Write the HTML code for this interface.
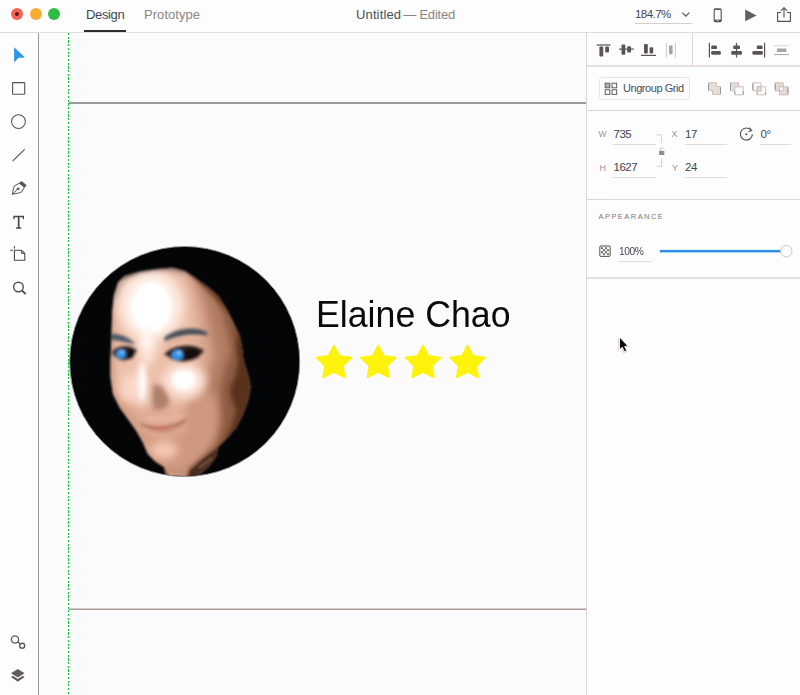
<!DOCTYPE html>
<html><head><meta charset="utf-8">
<style>
*{box-sizing:border-box;margin:0;padding:0}
html,body{width:800px;height:695px;overflow:hidden;background:#fbfbfb;font-family:"Liberation Sans",sans-serif;}
.abs{position:absolute}
#top{left:0;top:0;width:800px;height:33px;background:#fdfdfd;border-bottom:1px solid #e5dbd6}
#left{left:0;top:33px;width:39px;height:662px;background:#fdfdfd;border-right:1px solid #9b999a}
#canvas{left:39px;top:33px;width:547px;height:662px;background:#fbfbfb}
#right{left:586px;top:33px;width:214px;height:662px;background:#fdfdfd;border-left:1px solid #ddd6d3}
.t{position:absolute;white-space:nowrap;color:#3c3836;line-height:1}
.dot{position:absolute;width:12px;height:12px;border-radius:50%}
.hl{position:absolute;height:1px;background:#ddd6d3}
.ul{position:absolute;height:1px;background:#e3dbd8}
svg{position:absolute;left:0;top:0;overflow:visible}
</style></head><body>
<!-- TOP BAR -->
<div id="top" class="abs">
  <div class="dot" style="left:11px;top:8px;background:#f4625a"></div>
  <div class="abs" style="left:15px;top:12px;width:4px;height:4px;border-radius:50%;background:#5a1d12"></div>
  <div class="dot" style="left:30px;top:8px;background:#fbad33"></div>
  <div class="dot" style="left:48px;top:8px;background:#2dbd44"></div>
  <div class="t" style="left:86px;top:8px;font-size:13px;letter-spacing:-0.35px;color:#3d4a55">Design</div>
  <div class="abs" style="left:84px;top:30px;width:42px;height:2px;background:#2e2b2a"></div>
  <div class="t" style="left:144px;top:8px;font-size:13px;letter-spacing:0.05px;color:#8b8583">Prototype</div>
  <div class="t" style="left:356px;top:8px;font-size:13px;letter-spacing:0.13px;color:#46525c">Untitled <span style="color:#8b8583;letter-spacing:-0.2px;margin-left:-1.7px">— Edited</span></div>
  <div class="t" style="left:635px;top:9px;font-size:11.5px;letter-spacing:-0.55px;color:#3f4953">184.7%</div>
  <div class="abs" style="left:635px;top:23px;width:57px;height:1px;background:#d7cdc9"></div>
</div>
<!-- LEFT TOOLBAR -->
<div id="left" class="abs"></div>
<!-- CANVAS -->
<div id="canvas" class="abs"></div>
<!-- RIGHT PANEL -->
<div id="right" class="abs"></div>


<!-- UI ICONS SVG -->
<svg width="800" height="695" viewBox="0 0 800 695" fill="none">
<!-- top right -->
<path d="M682.3,12.6 L685.8,16.2 L689.3,12.6" stroke="#5a5553" stroke-width="1.2"/>
<rect x="714.2" y="9" width="7" height="12.6" rx="1.2" stroke="#55504e" stroke-width="1.1"/>
<rect x="714.2" y="8.6" width="7" height="1.3" fill="#55504e"/><rect x="714.2" y="19.6" width="7" height="2.2" fill="#55504e"/><rect x="716.8" y="20.2" width="1.8" height="0.9" fill="#d8d0cc"/>
<path d="M745.2,9.4 L756.6,15.4 L745.2,21.3 Z" fill="#65605d"/>
<path d="M781,12.5 L777.6,12.5 L777.6,21.4 L790.4,21.4 L790.4,12.5 L787,12.5" stroke="#55504e" stroke-width="1.1"/>
<path d="M784,17.5 L784,8.2 M780.8,10.8 L784,7.7 L787.2,10.8" stroke="#55504e" stroke-width="1.1"/>

<!-- left tools -->
<path d="M14.1,47.2 L24.5,57.1 L24.3,57.8 L18.5,57.8 L14.1,62.5 Z" fill="#2c96e7"/>
<rect x="12.6" y="82.6" width="12.1" height="11.7" rx="0.7" stroke="#55514f" stroke-width="1.1"/>
<circle cx="18.5" cy="121.6" r="6.9" stroke="#55514f" stroke-width="1.05"/>
<path d="M12.6,161.2 L24.6,149.4" stroke="#55514f" stroke-width="1.1"/>
<!-- pen -->
<g stroke="#55514f" stroke-width="1" stroke-linejoin="round" stroke-linecap="round">
<path d="M12.6,194 C12.9,190.4 13.5,187.8 14.5,185.8 L19.7,183.1 L24.5,187 L21.8,191.8 C19.4,193.1 16,193.7 12.6,194 Z"/>
<path d="M12.9,193.7 L17.4,189.4"/>
<circle cx="18" cy="188.8" r="0.9" fill="#55514f"/>
<path d="M19.8,183 L21.7,181.6 L26.1,185.4 L24.6,186.9 Z" fill="#55514f"/>
</g>
<!-- T -->
<path d="M13.3,215.8 H24 V219.2 H22.9 L22.6,217.3 H19.5 V227.2 L21.4,227.5 V228.7 H15.9 V227.5 L17.8,227.2 V217.3 H14.7 L14.4,219.2 H13.3 Z" fill="#4a4644"/>
<!-- artboard -->
<path d="M14.4,250.3 H21.4 L24.8,253.5 V260.2 H14.4 Z" stroke="#4a4644" stroke-width="1.1"/>
<path d="M21.4,250.3 V253.5 H24.8 Z" fill="#b9b5b3" stroke="#4a4644" stroke-width="0.8"/>
<path d="M10.2,250.3 H12.9 M14.4,245.9 V248.6" stroke="#4a4644" stroke-width="1"/>
<!-- zoom -->
<circle cx="18.45" cy="287" r="4.8" stroke="#524e4c" stroke-width="1.4"/>
<path d="M21.9,290.4 L25.7,294.2" stroke="#524e4c" stroke-width="1.9"/>
<!-- link -->
<circle cx="15" cy="639.5" r="3.6" stroke="#5f5b59" stroke-width="1.35"/>
<circle cx="22.2" cy="645.7" r="2.5" stroke="#5f5b59" stroke-width="1.35"/>
<path d="M17.9,642 L20.1,643.9" stroke="#5f5b59" stroke-width="1.3"/>
<!-- layers -->
<path d="M17.8,669 L24.6,673.2 L17.8,677.4 L11,673.2 Z" fill="#625d5a"/>
<path d="M11,677 L12.8,675.8 L17.8,679 L22.8,675.8 L24.6,677 L17.8,681.8 Z" fill="#625d5a"/>

<!-- right: align row -->
<g fill="#5a5553">
<rect x="596.6" y="44.4" width="14" height="1.2"/><rect x="599.4" y="46.4" width="3.8" height="10.2" rx="1"/><rect x="605.2" y="46.4" width="3.8" height="6.2" rx="1"/>
<rect x="619" y="48.5" width="14.8" height="1.2"/><rect x="621.5" y="44.6" width="3.8" height="10.2" rx="1"/><rect x="627.2" y="46.2" width="3.8" height="6.4" rx="1"/>
<rect x="641" y="54.8" width="15" height="1.2"/><rect x="644" y="44" width="3.8" height="9.6" rx="1"/><rect x="649.6" y="47.2" width="3.6" height="6.4" rx="1"/>
</g>
<g fill="#d9cbc5">
<rect x="665.8" y="42.8" width="1.1" height="14.8"/><rect x="674.9" y="42.8" width="1.1" height="14.8"/><rect x="669" y="45.6" width="3.6" height="8.6" rx="0.6" fill="#a5a5a7"/>
</g>
<g fill="#5a5553">
<rect x="708.8" y="42.8" width="1.2" height="14.8"/><rect x="711.2" y="45.6" width="5.8" height="3.5" rx="1.2"/><rect x="711.2" y="51" width="9.6" height="3.8" rx="1.2"/>
<rect x="735.9" y="42.8" width="1.2" height="14.8"/><rect x="733.2" y="45.6" width="6.8" height="3.5" rx="1.2"/><rect x="731.2" y="51" width="10.8" height="3.8" rx="1.2"/>
<rect x="764" y="42.8" width="1.2" height="14.8"/><rect x="756.8" y="45.6" width="5.8" height="3.5" rx="1.2"/><rect x="752.4" y="51" width="10.4" height="3.8" rx="1.2"/>
</g>
<rect x="774" y="45.2" width="15" height="1.1" fill="#e6d6ce"/><rect x="774" y="54" width="15" height="1.1" fill="#a9aeb1"/><rect x="776.9" y="48.4" width="9.4" height="3.6" rx="0.6" fill="#a5a5a7"/>
<!-- ungroup grid icon -->
<g stroke="#65605d" stroke-width="1">
<rect x="605.2" y="83.2" width="4.6" height="4.6" fill="#b3b1b0"/><rect x="612" y="83.2" width="4.6" height="4.6"/>
<rect x="605.2" y="89.8" width="4.6" height="4.6"/><rect x="612" y="89.8" width="4.6" height="4.6"/>
</g>
<!-- boolean icons -->
<g stroke="#cbbfba" stroke-width="1">
<path d="M708.5,82.8 H716.5 V86.6 H720.5 V94.4 H712.5 V90.6 H708.5 Z" fill="#e6dcd8"/>
<rect x="730.5" y="82.8" width="8" height="8" fill="#e6dcd8"/><rect x="734.8" y="86.8" width="8.4" height="8" fill="#fdfdfd"/>
<rect x="752.9" y="82.8" width="8" height="8" fill="#fdfdfd"/><rect x="757.2" y="86.8" width="8.4" height="8" fill="none"/><rect x="757.2" y="86.8" width="3.7" height="4" fill="#e6dcd8"/>
<rect x="775.2" y="82.8" width="8" height="8" fill="#e6dcd8"/><rect x="779.5" y="86.8" width="8.4" height="8" fill="#e6dcd8"/><rect x="779.5" y="86.8" width="3.7" height="4" fill="#fdfdfd"/>
</g>
<g stroke="#8f969b" stroke-width="1" fill="none">
<path d="M708.5,83.6 V89.8 M720.5,87.4 V93.6"/>
<path d="M730.5,83.6 V89.8 M734.8,91.4 V94 M743.2,91.4 V94"/>
<path d="M752.9,83.6 V89.8 M757.2,92.4 V94 M765.6,92.4 V94"/>
<path d="M775.2,83.6 V89.8 M787.9,87.4 V93.6"/>
</g>
<!-- lock bracket -->
<path d="M656.6,134.8 H661.6 V142.8 M661.6,158.4 V166.4 H656.6" stroke="#d9cfcb" stroke-width="1"/>
<rect x="659.1" y="150.8" width="5.2" height="4.2" fill="#8f9092"/>
<path d="M660.3,150.8 V149 A1.5,1.5 0 0 1 663.2,148.6" stroke="#c4bab6" stroke-width="0.9"/>
<!-- rotate icon -->
<path d="M751.2,130.4 A6,6 0 1 0 752.4,134.2" stroke="#4a4644" stroke-width="1.1"/>
<path d="M749.4,127.6 L752,130.6 L748.4,131.6" stroke="#4a4644" stroke-width="1"/>
<circle cx="746.4" cy="134.2" r="1" fill="#4a4644"/>
<!-- opacity icon -->
<rect x="599.8" y="246" width="10.4" height="10.4" rx="1" fill="#fdfdfd" stroke="#55504e" stroke-width="1"/>
<g fill="#77726f">
<rect x="601" y="247.2" width="2" height="2"/><rect x="605" y="247.2" width="2" height="2"/>
<rect x="603" y="249.2" width="2" height="2"/><rect x="607" y="249.2" width="2" height="2"/>
<rect x="601" y="251.2" width="2" height="2"/><rect x="605" y="251.2" width="2" height="2"/>
<rect x="603" y="253.2" width="2" height="2"/><rect x="607" y="253.2" width="2" height="2"/>
</g>
<!-- slider -->
<rect x="659.8" y="249.9" width="122" height="2.5" fill="#2c8fe8"/>
<circle cx="786.3" cy="251.2" r="5.7" fill="#fdfdfd" stroke="#d3c7c2" stroke-width="1"/>
<!-- cursor -->
<path d="M618.2,337.6 L618.2,350.4 L621.2,348.4 L623.6,353.2 L627.6,351.6 L625.6,347.4 L629.6,346.6 Z" fill="#dfcdc4" opacity="1" filter="url(#cb)"/>
<path d="M620,338 L620,348.8 L622.4,346.8 L624.7,351.2 L626.2,350.5 L624.1,346.2 L627.2,345.7 Z" fill="#0a0a0a" stroke="#ffffff" stroke-width="1.3" stroke-linejoin="round" paint-order="stroke"/>
<defs><filter id="cb" x="-30%" y="-30%" width="160%" height="160%"><feGaussianBlur stdDeviation="0.6"/></filter></defs>
</svg>

<!-- right panel text & lines -->
<div class="hl" style="left:587px;top:65px;width:213px;height:2px;background:#e6dfdc"></div>
<div class="abs" style="left:692px;top:33px;width:1px;height:33px;background:#ddd6d3"></div>
<div class="abs" style="left:598.5px;top:77px;width:91.5px;height:23px;border:1px solid #e9e2df;border-radius:3.5px"></div>
<div class="t" style="left:623px;top:82.8px;font-size:11px;letter-spacing:-0.45px;color:#44505c">Ungroup Grid</div>
<div class="hl" style="left:587px;top:110px;width:213px"></div>
<div class="t" style="left:598.5px;top:130px;font-size:8.5px;color:#9a9492">W</div>
<div class="t" style="left:613.5px;top:128.5px;font-size:11.5px;letter-spacing:-0.5px;color:#3e4650">735</div>
<div class="ul" style="left:613px;top:144px;width:43px"></div>
<div class="t" style="left:671.5px;top:130px;font-size:9px;color:#9a9492">X</div>
<div class="t" style="left:685px;top:128.5px;font-size:11.5px;letter-spacing:-0.5px;color:#3e4650">17</div>
<div class="ul" style="left:685px;top:144px;width:42px"></div>
<div class="t" style="left:760.5px;top:128.5px;font-size:11.5px;letter-spacing:-0.5px;color:#3e4650">0°</div>
<div class="ul" style="left:760px;top:144px;width:31px"></div>
<div class="t" style="left:599.5px;top:163.5px;font-size:9px;color:#9a9492">H</div>
<div class="t" style="left:613.5px;top:162px;font-size:11.5px;letter-spacing:-0.5px;color:#3e4650">1627</div>
<div class="ul" style="left:613px;top:177px;width:43px"></div>
<div class="t" style="left:672px;top:163.5px;font-size:9px;color:#9a9492">Y</div>
<div class="t" style="left:685px;top:162px;font-size:11.5px;letter-spacing:-0.5px;color:#3e4650">24</div>
<div class="ul" style="left:685px;top:177px;width:42px"></div>
<div class="hl" style="left:587px;top:199px;width:213px"></div>
<div class="t" style="left:598.5px;top:212.5px;font-size:7.5px;letter-spacing:1.45px;color:#7d7775">APPEARANCE</div>
<div class="t" style="left:618.5px;top:246px;font-size:11.5px;letter-spacing:-0.5px;color:#3e4650;transform-origin:0 0;transform:scaleX(0.89)">100%</div>
<div class="ul" style="left:618px;top:261px;width:33px"></div>
<div class="hl" style="left:587px;top:277px;width:213px;height:2px;background:#e6dfdc"></div>

<!-- canvas lines -->
<div class="abs" style="left:67.9px;top:32.8px;width:1.2px;height:663px;background:repeating-linear-gradient(to bottom,#0fc83e 0 2.2px,transparent 2.2px 3.7px)"></div>
<div class="abs" style="left:69px;top:102px;width:517px;height:2px;background:#9a999b"></div>
<div class="abs" style="left:69px;top:608px;width:517px;height:1px;background:#d9c9c2"></div>
<div class="abs" style="left:69px;top:609px;width:517px;height:1px;background:#a19d9d"></div>

<!-- name -->
<div class="t" id="name" style="left:316px;top:297.4px;font-size:36px;color:#0a0a0a;transform-origin:0 0;transform:scaleX(0.992);">Elaine Chao</div>

<!-- MAIN SVG overlay -->
<svg width="800" height="695" viewBox="0 0 800 695">
<defs>
  <clipPath id="cc"><circle cx="184.7" cy="361.5" r="114.5"/></clipPath>
  <filter id="b2" x="-20%" y="-20%" width="140%" height="140%"><feGaussianBlur stdDeviation="2"/></filter>
  <filter id="b4" x="-30%" y="-30%" width="160%" height="160%"><feGaussianBlur stdDeviation="4"/></filter>
  <clipPath id="facec"><path d="M113.9,295.6 L118.0,282.4 L124.6,275.8 L139.5,271.6 L156.0,269.0 L172.6,267.5 L185.0,270.8 L195.0,277.4 L206.5,285.7 L218.0,295.6 L226.4,308.9 L233.0,322.0 L239.6,335.4 L242.0,348.6 L243.5,361.0 L248.7,377.5 L250.4,387.5 L247.9,400.7 L243.0,414.0 L236.3,427.2 L228.0,437.0 L218.0,447.0 L216.0,457.0 L209.0,466.0 L198.0,476.0 L192.0,482.0 L167.0,482.0 L164.3,467.0 L156.0,462.0 L147.8,453.7 L142.8,442.0 L136.2,430.5 L128.0,419.0 L119.6,407.3 L113.0,394.0 L110.5,377.5 L110.5,361.0 L111.4,338.7 L112.2,312.0 Z"/></clipPath>
  <filter id="b3" x="-30%" y="-30%" width="160%" height="160%"><feGaussianBlur stdDeviation="3"/></filter>
  <filter id="b6" x="-40%" y="-40%" width="180%" height="180%"><feGaussianBlur stdDeviation="6"/></filter>
  <filter id="b1" x="-20%" y="-20%" width="140%" height="140%"><feGaussianBlur stdDeviation="1"/></filter>
  <path id="star" d="M0.00,-17.48 L5.47,-7.19 L17.40,-5.40 L8.84,2.74 L10.76,14.14 L0.00,8.88 L-10.76,14.14 L-8.84,2.74 L-17.40,-5.40 L-5.47,-7.19 Z"/>
</defs>

<!-- PHOTO -->
<circle cx="184.7" cy="361.5" r="115" fill="#030507" stroke="#8f8f8f" stroke-width="1"/>
<g clip-path="url(#cc)">
 <g filter="url(#b1)">
  <g clip-path="url(#facec)">
   <rect x="100" y="260" width="160" height="225" fill="#ecbfa9"/>
   <!-- right boundary shading -->
   <path d="M185.0,266.0 L195.0,273.0 L206.5,281.0 L220.0,291.0 L230.0,305.0 L238.0,319.0 L245.0,333.0 L248.0,348.0 L249.0,361.0 L254.0,377.5 L256.0,387.5 L253.0,401.0 L248.0,415.0 L241.0,429.0 L232.0,441.0 L222.0,451.0 L210.0,460.0 L199.0,468.0 L191.0,484.0 L170.0,484.0 L175.0,462.0 L183.0,446.0 L190.0,432.0 L194.0,415.0 L195.0,395.0 L199.0,372.0 L202.0,352.0 L199.0,328.0 L194.0,298.0 L186.0,272.0 Z" fill="#d39f87" filter="url(#b6)"/>
   <path d="M185.0,266.0 L195.0,273.0 L206.5,281.0 L220.0,291.0 L230.0,305.0 L238.0,319.0 L245.0,333.0 L248.0,348.0 L249.0,361.0 L254.0,377.5 L256.0,387.5 L253.0,401.0 L248.0,415.0 L241.0,429.0 L232.0,441.0 L222.0,451.0 L210.0,460.0 L199.0,468.0 L191.0,484.0 L181.0,484.0 L183.0,464.0 L191.0,450.0 L199.0,438.0 L203.0,425.0 L203.0,410.0 L204.0,395.0 L209.0,375.0 L215.0,355.0 L211.0,332.0 L205.0,305.0 L196.0,280.0 Z" fill="#b37d63" filter="url(#b4)"/>
   <path d="M185.0,266.0 L195.0,273.0 L206.5,281.0 L220.0,291.0 L230.0,305.0 L238.0,319.0 L245.0,333.0 L248.0,348.0 L249.0,361.0 L254.0,377.5 L256.0,387.5 L253.0,401.0 L248.0,415.0 L241.0,429.0 L232.0,441.0 L222.0,451.0 L210.0,460.0 L199.0,468.0 L191.0,484.0 L190.0,484.0 L196.0,462.0 L207.0,448.0 L216.0,436.0 L222.0,420.0 L220.0,405.0 L220.0,390.0 L224.0,372.0 L231.0,352.0 L228.0,335.0 L222.0,312.0 L214.0,292.0 Z" fill="#8d5b42" filter="url(#b3)"/>
   <path d="M185.0,266.0 L195.0,273.0 L206.5,281.0 L220.0,291.0 L230.0,305.0 L238.0,319.0 L245.0,333.0 L248.0,348.0 L249.0,361.0 L254.0,377.5 L256.0,387.5 L253.0,401.0 L248.0,415.0 L241.0,429.0 L232.0,441.0 L222.0,451.0 L210.0,460.0 L199.0,468.0 L191.0,484.0 L191.0,484.0 L196.0,468.0 L206.0,458.0 L217.0,449.0 L226.0,438.0 L232.0,425.0 L236.0,410.0 L231.0,398.0 L230.0,388.0 L236.0,375.0 L238.0,360.0 L236.0,347.0 L237.0,333.0 L234.0,318.0 Z" fill="#5a311d" filter="url(#b2)"/>
   <!-- top hairline shading -->
   <path d="M112,300 L118,282 L125,275 L140,271 L156,268 L173,267 L186,270" stroke="#a98a80" stroke-width="8" fill="none" filter="url(#b3)"/>
   <!-- left edge soft shade -->
   <path d="M110,300 L110,378 L113,394 L120,408 L128,420 L136,431 L143,443 L148,454 L156,462 L165,468" stroke="#cf9a82" stroke-width="8" fill="none" filter="url(#b3)"/>
   <!-- jaw/neck shadow -->
   <path d="M150,456 L160,466 L172,470 L186,464 L200,454 L214,444" stroke="#9a6a52" stroke-width="9" fill="none" filter="url(#b3)"/>
   <path d="M166,470 L167,482" stroke="#6a4028" stroke-width="4" fill="none" filter="url(#b1)"/>
   <!-- lower face tone -->
   <path d="M112,398 L150,408 L190,404 L215,396 L215,440 L196,470 L166,474 L146,452 L128,420 Z" fill="#dca68d" filter="url(#b6)" opacity="0.8"/>

   <path d="M186,400 L212,392 L214,430 L200,450 L184,466 L168,470 L152,460 L144,446 L138,434 L150,438 L170,440 L186,432 Z" fill="#cf977f" filter="url(#b4)"/>
   <path d="M112,396 L120,408 L128,420 L136,431 L143,443 L148,454 L156,462 L150,440 L138,420 L126,404 Z" fill="#d39e86" filter="url(#b3)"/>
   <!-- under jaw -->
   <path d="M187,480 L189,470 L198,462 L207,455 L219,446 L217,458 L209,467 L198,477 L193,483 Z" fill="#4a2c1c" filter="url(#b1)"/>
   <path d="M214,447 L200,458 L189,468" stroke="#9a6e58" stroke-width="1.8" fill="none" filter="url(#b1)"/>
   <path d="M212,458 L199,468" stroke="#8a6450" stroke-width="1.5" fill="none"/>
   <!-- light zones -->
   <g filter="url(#b4)">
    <ellipse cx="151" cy="306" rx="33" ry="36" fill="#fde9df"/>
    <ellipse cx="147" cy="345" rx="10" ry="20" fill="#fbe4d8"/>
    <ellipse cx="184" cy="381" rx="22" ry="18" fill="#fbe0d2"/>
    <ellipse cx="129" cy="388" rx="9" ry="14" fill="#f9d6c6"/>
    <ellipse cx="164" cy="450" rx="14" ry="9" fill="#f5c9b5"/>
    <ellipse cx="141" cy="385" rx="5" ry="22" fill="#fbe6dc"/>
   </g>
   <g filter="url(#b2)">
    <ellipse cx="151" cy="307" rx="21" ry="26" fill="#ffffff"/>
    <ellipse cx="147" cy="338" rx="6" ry="12" fill="#fff4ee"/>
    <ellipse cx="184" cy="380" rx="12.5" ry="10.5" fill="#ffffff"/>
    <ellipse cx="142.4" cy="382" rx="3.2" ry="19" fill="#ffffff"/>
   </g>
   <!-- nose shadow -->
   <g filter="url(#b2)">
    <path d="M153,384 L162,386 L169,398 L168,407 L158,409 L152,404 Z" fill="#ad8069"/>
    <path d="M151,409 L160,409 L168,404" stroke="#b57a68" stroke-width="2" fill="none"/>
   </g>
   <!-- mouth -->
   <g filter="url(#b1)">
    <path d="M141,424 C152,430 168,430 186,421 C178,433 156,438 141,424 Z" fill="#c98a78"/>
    <path d="M141,424 C152,429 168,429 187,420" stroke="#9c5e4c" stroke-width="1.8" fill="none"/>
    <path d="M146,418 C156,420 168,420 180,416" stroke="#e9b7a4" stroke-width="3" fill="none"/>
    <rect x="157" y="427.5" width="5" height="1.6" fill="#f0503c"/>
   </g>
   <!-- brows -->
   <g filter="url(#b1)">
    <path d="M166,338 C176,330 194,327 207,334 C194,332 178,334 166,339 Z" fill="#48505a" stroke="#48505a" stroke-width="3.4"/>
    <path d="M111,335 C118,335 125,337 131,342 C124,341 117,339 111,338.5 Z" fill="#4e5a68" stroke="#4e5a68" stroke-width="2.8"/>
    <path d="M112.5,353 C118,345.5 131,345 136.5,351.5" stroke="#1c1310" stroke-width="2" fill="none"/>
    <path d="M165,355 C173,345 193,343.5 203.5,351.5" stroke="#1c1310" stroke-width="2.2" fill="none"/>
    <path d="M166,345 C176,339 192,338 204,343" stroke="#c99a84" stroke-width="2" fill="none" opacity="0.8"/>
    <!-- eye sockets -->
    <path d="M165,354 C173,345 193,344 203,352 C195,364 175,365 165,354 Z" fill="#2a1b16"/>
    <ellipse cx="177.5" cy="355" rx="6" ry="5" fill="#3196ea"/>
    <ellipse cx="179" cy="352.5" rx="2" ry="1.6" fill="#a8d8ff"/>
    <ellipse cx="191" cy="354.5" rx="8.5" ry="5" fill="#170d0a"/>
    <path d="M112,353 C118,345 131,345 136,352 C131,363 118,363 112,353 Z" fill="#2a1b16"/>
    <ellipse cx="121" cy="354" rx="5" ry="4.6" fill="#3196ea"/>
    <ellipse cx="122" cy="352" rx="1.6" ry="1.4" fill="#a8d8ff"/>
    <ellipse cx="130" cy="354.5" rx="4.2" ry="4.2" fill="#170d0a"/>
   </g>
  </g>
 </g>
 <g filter="url(#b2)">
  <path d="M122,277 L140,270.5 L156,268 L173,266.5 L186,270 L196,277 L207,285" stroke="#07090c" stroke-width="3" fill="none" opacity="0.55"/>
 </g>
</g>

<!-- STARS -->
<g fill="#fff20c" stroke="#fff20c" stroke-width="1.8" stroke-linejoin="round">
  <use href="#star" x="334" y="363.1"/>
  <use href="#star" x="378.3" y="363.1"/>
  <use href="#star" x="423" y="363.1"/>
  <use href="#star" x="467.5" y="363.1"/>
</g>
</svg>
</body></html>
